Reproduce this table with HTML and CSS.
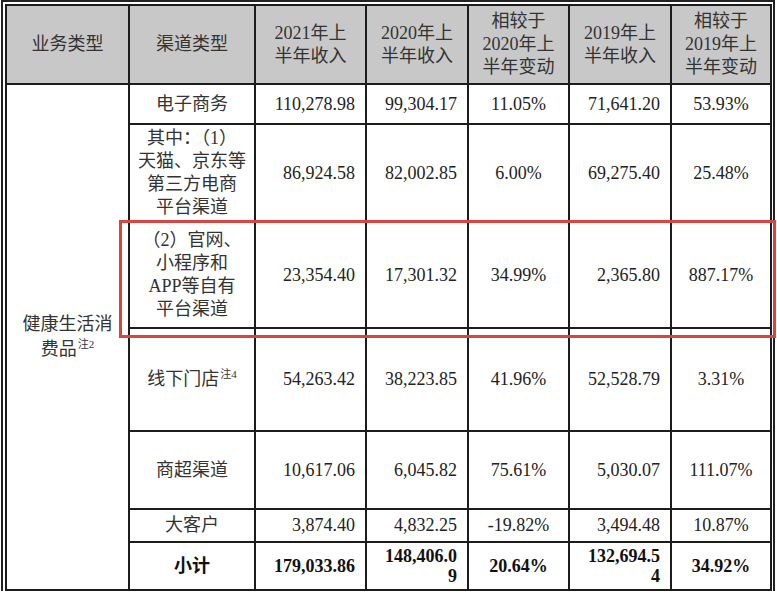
FILE: index.html
```html
<!DOCTYPE html>
<html lang="zh">
<head>
<meta charset="utf-8">
<title>收入按渠道</title>
<link rel="stylesheet" href="styles.css">
</head>
<body>
<div class="frame">
  <table class="rev">
    <colgroup>
      <col class="c-biz"><col class="c-ch"><col class="c-n1"><col class="c-n2"><col class="c-p1"><col class="c-n3"><col class="c-p2">
    </colgroup>
    <thead>
      <tr class="r-head">
        <th>业务类型</th>
        <th>渠道类型</th>
        <th>2021年上<br>半年收入</th>
        <th>2020年上<br>半年收入</th>
        <th>相较于<br>2020年上<br>半年变动</th>
        <th>2019年上<br>半年收入</th>
        <th>相较于<br>2019年上<br>半年变动</th>
      </tr>
    </thead>
    <tbody>
      <tr class="r1">
        <td rowspan="7" class="biz">健康生活消<br>费品<sup>注2</sup></td>
        <td class="ch">电子商务</td>
        <td class="num">110,278.98</td>
        <td class="num">99,304.17</td>
        <td class="pct">11.05%</td>
        <td class="num">71,641.20</td>
        <td class="pct">53.93%</td>
      </tr>
      <tr class="r2">
        <td class="ch">其中：（1）<br>天猫、京东等<br>第三方电商<br>平台渠道</td>
        <td class="num">86,924.58</td>
        <td class="num">82,002.85</td>
        <td class="pct">6.00%</td>
        <td class="num">69,275.40</td>
        <td class="pct">25.48%</td>
      </tr>
      <tr class="r3">
        <td class="ch">（2）官网、<br>小程序和<br>APP等自有<br>平台渠道</td>
        <td class="num">23,354.40</td>
        <td class="num">17,301.32</td>
        <td class="pct">34.99%</td>
        <td class="num">2,365.80</td>
        <td class="pct">887.17%</td>
      </tr>
      <tr class="r4">
        <td class="ch">线下门店<sup>注4</sup></td>
        <td class="num">54,263.42</td>
        <td class="num">38,223.85</td>
        <td class="pct">41.96%</td>
        <td class="num">52,528.79</td>
        <td class="pct">3.31%</td>
      </tr>
      <tr class="r5">
        <td class="ch">商超渠道</td>
        <td class="num">10,617.06</td>
        <td class="num">6,045.82</td>
        <td class="pct">75.61%</td>
        <td class="num">5,030.07</td>
        <td class="pct">111.07%</td>
      </tr>
      <tr class="r6">
        <td class="ch">大客户</td>
        <td class="num">3,874.40</td>
        <td class="num">4,832.25</td>
        <td class="pct">-19.82%</td>
        <td class="num">3,494.48</td>
        <td class="pct">10.87%</td>
      </tr>
      <tr class="r7 total">
        <td class="ch">小计</td>
        <td class="num">179,033.86</td>
        <td class="num wrap">148,406.0<br>9</td>
        <td class="pct">20.64%</td>
        <td class="num wrap">132,694.5<br>4</td>
        <td class="pct">34.92%</td>
      </tr>
    </tbody>
  </table>
  <div class="highlight"></div>
</div>
</body>
</html>
```

FILE: styles.css
```css
html, body {
  margin: 0;
  padding: 0;
  background: #ffffff;
}

.frame {
  position: relative;
  margin-left: 1px;
  width: 767px;
  border-top: 2px solid #222;
  border-left: 2px solid #222;
  border-right: 2px solid #222;
  padding: 2px 1px 0 2px;
  font-family: "Liberation Serif", "Noto Sans CJK SC", serif;
  font-size: 18px;
  color: #222;
}

.rev {
  width: 767px;
  table-layout: fixed;
  border-collapse: collapse;
  line-height: 23px;
}

.c-biz { width: 123px; }
.c-ch { width: 126px; }
.c-n1 { width: 111px; }
.c-n2 { width: 102px; }
.c-p1 { width: 101px; }
.c-n3 { width: 102px; }
.c-p2 { width: 100px; }

.rev th,
.rev td {
  border: 2px solid #1c1c1c;
  padding: 0;
  vertical-align: middle;
  white-space: nowrap;
}

.rev th {
  background: #c8c8c8;
  font-weight: normal;
  color: #333;
  text-align: center;
}

.r-head { height: 79px; }
.r1 { height: 40px; }
.r2 { height: 98px; }
.r3 { height: 106px; }
.r4 { height: 103px; }
.r5 { height: 78px; }
.r6 { height: 33px; }
.r7 { height: 48px; }

.biz {
  text-align: center;
  line-height: 25px;
  color: #333;
}

.ch {
  text-align: center;
  color: #333;
}

.num {
  text-align: right;
  padding-right: 10px !important;
}

.pct {
  text-align: center;
}

sup {
  font-size: 11px;
  line-height: 0;
  vertical-align: 7px;
  margin-left: 1px;
}

.total td {
  font-weight: bold;
  color: #111;
}

.total .wrap {
  line-height: 20px;
}

.highlight {
  position: absolute;
  left: 116px;
  top: 218px;
  width: 657px;
  height: 118px;
  box-sizing: border-box;
  border: 3px solid #d6453f;
  pointer-events: none;
}
```
